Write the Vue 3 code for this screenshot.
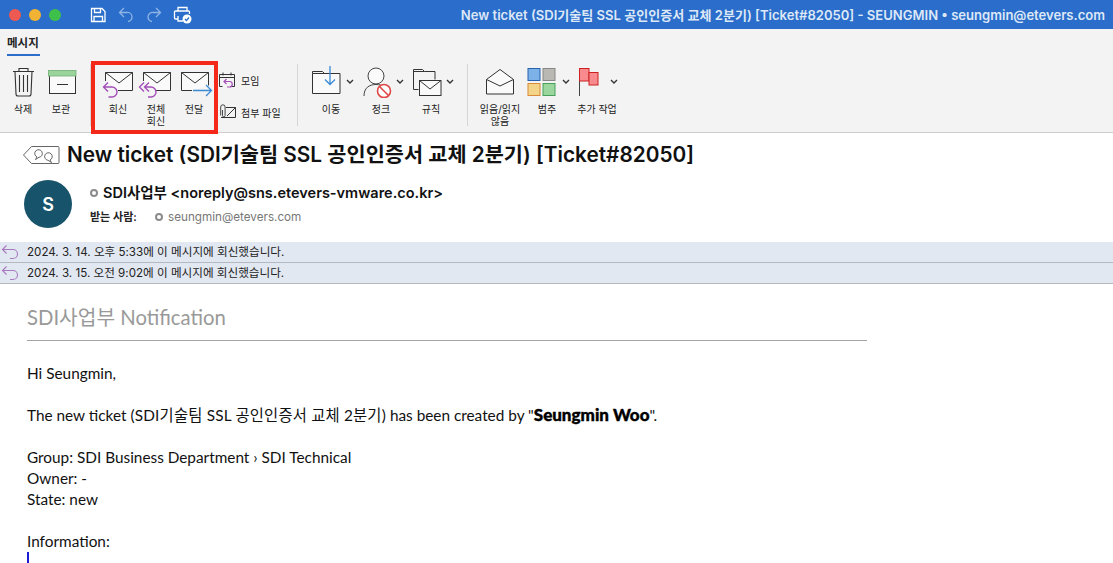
<template>
  <div class="window">
    <!-- title bar -->
    <header class="titlebar">
      <div class="lights">
        <span class="light red"></span>
        <span class="light yellow"></span>
        <span class="light green"></span>
      </div>
      <div class="quick">
        <svg width="18" height="18" viewBox="0 0 18 18" fill="none" stroke="#fff" stroke-width="1.3">
          <path d="M2.500 2.500h10.500l3 3v10h-13.500z" />
          <path d="M5.500 2.500v4h6v-4M5 15.500v-5h8.500v5" />
        </svg>
        <svg width="18" height="18" viewBox="0 0 18 18" fill="none" stroke="#8fb3e6" stroke-width="1.3">
          <path d="M7 2L2.500 6.500 7 11M2.500 6.500H10a4.500 4.500 0 0 1 1 9" />
        </svg>
        <svg width="18" height="18" viewBox="0 0 18 18" fill="none" stroke="#8fb3e6" stroke-width="1.3">
          <path d="M11 2l4.500 4.500L11 11M15.500 6.500H8a4.500 4.500 0 0 0-1 9" />
        </svg>
        <svg width="20" height="18" viewBox="0 0 20 18" fill="none" stroke="#fff" stroke-width="1.3">
          <path d="M5 5V1.500h9V5M5 13H2.500a1 1 0 0 1-1-1V6a1 1 0 0 1 1-1h13a1 1 0 0 1 1 1v2" />
          <path d="M5 10v5h5" />
          <circle cx="14" cy="13" r="4.500" fill="#fff" stroke="none" />
          <path d="M12 13l1.500 1.500 2.500-3" stroke="#2a6dca" />
        </svg>
      </div>
      <div class="wintitle">New ticket (SDI기술팀 SSL 공인인증서 교체 2분기) [Ticket#82050] - SEUNGMIN • seungmin@etevers.com</div>
    </header>

    <!-- ribbon -->
    <section class="ribbon">
      <div class="tabs"><span class="tab">메시지</span></div>
      <div class="tools">
        <div class="tool">
          <svg width="38" height="34" viewBox="0 0 38 34" fill="none" stroke="#333" stroke-width="1.1">
            <path d="M9 7.500h21M15 7.500V4.500h9v3M11 7.500l1 22.500a2 2 0 0 0 2 2h11a2 2 0 0 0 2-2l1-22.500" />
            <path d="M15.500 11v17M19.500 11v17M23.500 11v17" />
          </svg>
          <span class="label">삭제</span>
        </div>
        <div class="tool">
          <svg width="38" height="34" viewBox="0 0 38 34" fill="none">
            <rect x="7.500" y="7.500" width="26" height="22" fill="#fafafa" stroke="#333" />
            <rect x="6.500" y="6.500" width="27.500" height="5.500" fill="#9bd49b" stroke="#6fae78" stroke-width=".8" />
            <path d="M15 20.500h11" stroke="#333" />
          </svg>
          <span class="label">보관</span>
        </div>
        <div class="sep"></div>

        <div class="tool">
          <svg width="38" height="34" viewBox="0 0 38 34" fill="none">
            <path d="M6.500 17V8.500h27v18H19" fill="#fafafa" stroke="#333" />
            <path d="M6.500 8.500L20 19l13.500-10.500" stroke="#333" />
            <path d="M9 18.500L4.500 23 9 27.500M4.500 23H13a5 5 0 0 1 0 10H9.500" stroke="#a34fb8" stroke-width="1.400" />
          </svg>
          <span class="label">회신</span>
        </div>
        <div class="tool">
          <svg width="38" height="34" viewBox="0 0 38 34" fill="none">
            <path d="M6.500 17V8.500h27v18H19" fill="#fafafa" stroke="#333" />
            <path d="M6.500 8.500L20 19l13.500-10.500" stroke="#333" />
            <path d="M7 18.500L2.500 23 7 27.500M12 18.500L7.500 23 12 27.500M7.500 23H14a5 5 0 0 1 0 10H11" stroke="#a34fb8" stroke-width="1.400" />
          </svg>
          <span class="label">전체<br />회신</span>
        </div>
        <div class="tool">
          <svg width="38" height="34" viewBox="0 0 38 34" fill="none">
            <path d="M17 26.500H6.500v-18h27v13" fill="#fafafa" stroke="#333" />
            <path d="M6.500 8.500L20 19l13.500-10.500" stroke="#333" />
            <path d="M18 26.500h18M31 21l5.500 5.500L31 32" stroke="#3a8ad6" stroke-width="1.300" />
          </svg>
          <span class="label">전달</span>
        </div>

        <div class="side">
          <div class="side-row">
            <svg width="18" height="18" viewBox="0 0 18 18" fill="none">
              <path d="M12 15.500h4.500v-12h-15v12h3M1.500 6.500h15" stroke="#333" />
              <path d="M5 1.500v3M13 1.500v3" stroke="#333" />
              <path d="M8.500 8L6 10.500 8.500 13M6 10.500h5.500a2.500 2.500 0 0 1 0 5.500H9" stroke="#a34fb8" stroke-width="1.200" />
            </svg>
            <span>모임</span>
          </div>
          <div class="side-row">
            <svg width="18" height="18" viewBox="0 0 18 18" fill="none">
              <path d="M8 4.500h9.500v10H3" stroke="#333" />
              <path d="M9 13l8.500-8.500" stroke="#333" />
              <path d="M4.500 7v5.500a1.300 1.300 0 0 0 2.600 0V4a2.200 2.200 0 0 0-4.400 0v8.500" stroke="#333" stroke-width=".9" />
            </svg>
            <span>첨부 파일</span>
          </div>
        </div>
        <div class="sep sep-b"></div>

        <div class="tool drop">
          <svg width="50" height="34" viewBox="0 0 50 34" fill="none">
            <path d="M6.500 9.500h27.500v20H6.500z" fill="#fafafa" stroke="#333" />
            <path d="M6.500 9.500v-2h10l2 2" stroke="#333" />
            <path d="M24 2v18.500M19 15.500l5 5 5-5" stroke="#3a8ad6" stroke-width="1.300" />
          </svg>
          <svg class="chev" width="8" height="6" viewBox="0 0 8 6" fill="none" stroke="#333" stroke-width="1.400"><path d="M1 1l3 3 3-3" /></svg>
          <span class="label">이동</span>
        </div>
        <div class="tool drop">
          <svg width="50" height="34" viewBox="0 0 50 34" fill="none">
            <circle cx="20" cy="12" r="8" fill="#fafafa" stroke="#444" />
            <path d="M8 32c0-8 5-11.500 12-11.500s12 3.500 12 11.500" stroke="#444" />
            <circle cx="28" cy="27" r="6.500" fill="#fff" stroke="#e04848" stroke-width="1.600" />
            <path d="M23.500 22.500l9 9" stroke="#e04848" stroke-width="1.600" />
          </svg>
          <svg class="chev" width="8" height="6" viewBox="0 0 8 6" fill="none" stroke="#333" stroke-width="1.400"><path d="M1 1l3 3 3-3" /></svg>
          <span class="label">정크</span>
        </div>
        <div class="tool drop">
          <svg width="50" height="34" viewBox="0 0 50 34" fill="none">
            <path d="M7.500 25.500v-20h9l2 2h10.500v8" stroke="#333" />
            <path d="M7.500 7.500h11M7.500 25.500h5" stroke="#333" />
            <rect x="13.500" y="16.500" width="21.500" height="15" fill="#fafafa" stroke="#333" />
            <path d="M13.500 16.500L24 25l11-8.500" stroke="#333" />
          </svg>
          <svg class="chev" width="8" height="6" viewBox="0 0 8 6" fill="none" stroke="#333" stroke-width="1.400"><path d="M1 1l3 3 3-3" /></svg>
          <span class="label">규칙</span>
        </div>
        <div class="sep sep-c"></div>

        <div class="tool wide">
          <svg width="50" height="34" viewBox="0 0 50 34" fill="none">
            <path d="M11.500 15.500L25 5.500l13.500 10v14.500h-27z" fill="#fafafa" stroke="#333" />
            <path d="M11.500 15.500L25 22l13.500-6.500" stroke="#333" />
          </svg>
          <span class="label">읽음/읽지<br />않음</span>
        </div>
        <div class="tool drop cat">
          <svg width="44" height="34" viewBox="0 0 44 34" fill="none">
            <rect x="3" y="4.500" width="12" height="12" fill="#7cb2e8" stroke="#2a62ad" />
            <rect x="18" y="4.500" width="12" height="12" fill="#b9b8b2" stroke="#888" />
            <rect x="3" y="19.500" width="12" height="12" fill="#f3d489" stroke="#d98a3a" />
            <rect x="18" y="19.500" width="12" height="12" fill="#9bd69f" stroke="#47a05a" />
          </svg>
          <svg class="chev" width="8" height="6" viewBox="0 0 8 6" fill="none" stroke="#333" stroke-width="1.400"><path d="M1 1l3 3 3-3" /></svg>
          <span class="label">범주</span>
        </div>
        <div class="tool drop more">
          <svg width="50" height="34" viewBox="0 0 50 34" fill="none">
            <path d="M7.500 5v27" stroke="#444" />
            <rect x="7.500" y="4.500" width="9.500" height="12.500" fill="#f98b8f" stroke="#c22" />
            <rect x="17" y="8.500" width="9" height="12.500" fill="#f98b8f" stroke="#c22" />
          </svg>
          <svg class="chev" width="8" height="6" viewBox="0 0 8 6" fill="none" stroke="#333" stroke-width="1.400"><path d="M1 1l3 3 3-3" /></svg>
          <span class="label">추가 작업</span>
        </div>
      </div>
      <div class="highlight"></div>
    </section>

    <!-- message header -->
    <section class="msg-head">
      <div class="subject-row">
        <svg width="38" height="20" viewBox="0 0 38 20" fill="none" stroke="#555" stroke-width=".9">
          <path d="M9.500 1.500H36a1 1 0 0 1 1 1v15a1 1 0 0 1-1 1H9.500L1.500 10z" />
          <path d="M15 12l-1.500 2.500L17 12.300a3.800 3.800 0 1 0-2-.3z" />
          <path d="M28 15l1.500 2.500L26 15.300a3.800 3.800 0 1 1 2-.3z" />
        </svg>
        <h1 class="subject">New ticket (SDI기술팀 SSL 공인인증서 교체 2분기) [Ticket#82050]</h1>
      </div>
      <div class="people">
        <div class="avatar">S</div>
        <div class="addr">
          <div class="from"><span class="dot"></span>SDI사업부 &lt;noreply@sns.etevers-vmware.co.kr&gt;</div>
          <div class="to">
            <span class="to-label">받는 사람:</span>
            <span class="dot"></span><span class="to-mail">seungmin@etevers.com</span>
          </div>
        </div>
      </div>
    </section>

    <div class="notice" v-for="n in notices" :key="n">
      <svg width="20" height="18" viewBox="0 0 20 18" fill="none" stroke="#a878c0" stroke-width="1.100">
        <path d="M6.500 1.500L2.500 5.500l4 4M2.500 5.500H13a4.500 4.500 0 0 1 0 9h-3" />
      </svg>
      <span>{{ n }}</span>
    </div>

    <!-- body -->
    <main class="mail">
      <h2 class="brand">SDI사업부 Notification</h2>
      <hr class="rule" />
      <p>Hi Seungmin,</p>
      <p>The new ticket <span class="ko">(SDI기술팀 SSL 공인인증서 교체 2분기)</span> has been created by "<b>Seungmin Woo</b>".</p>
      <p>Group: SDI Business Department › SDI Technical<br />Owner: -<br />State: new</p>
      <p class="info">Information:</p>
      <div class="caret"></div>
    </main>
  </div>
</template>

<script setup>
const notices = [
  '2024. 3. 14. 오후 5:33에 이 메시지에 회신했습니다.',
  '2024. 3. 15. 오전 9:02에 이 메시지에 회신했습니다.',
]
</script>

<style>
html, body {
  margin: 0;
  background: #fff;
}
</style>

<style scoped>
.window {
  width: 1113px;
  height: 563px;
  overflow: hidden;
  display: flex;
  flex-direction: column;
  font-family: Inter, "Noto Sans CJK KR", sans-serif;
  color: #111;
  background: #fff;
}

/* Title bar */
.titlebar {
  height: 29px;
  flex: none;
  background: #2a6dca;
  display: flex;
  align-items: center;
}

.lights {
  display: flex;
  gap: 8px;
  margin-left: 9px;
}

.light {
  width: 12px;
  height: 12px;
  border-radius: 50%;
}

.red { background: #ee5a52; }
.yellow { background: #f2b233; }
.green { background: #3fc04a; }

.quick {
  display: flex;
  align-items: center;
  gap: 10px;
  margin-left: 28px;
}

.wintitle {
  margin-left: auto;
  margin-right: 8px;
  font-size: 13.050px;
  font-weight: 600;
  color: #dde8f7;
  white-space: nowrap;
}

/* Ribbon */
.ribbon {
  position: relative;
  height: 103px;
  flex: none;
  background: #f3f3f3;
  border-bottom: 1px solid #cfcfcf;
}

.tabs {
  height: 28px;
  padding-left: 7px;
}

.tab {
  display: inline-block;
  height: 25px;
  line-height: 28px;
  font-size: 11.500px;
  font-weight: 700;
  color: #222;
  border-bottom: 2px solid #2a6dca;
  width: 33px;
  white-space: nowrap;
}

.tools {
  display: flex;
  align-items: flex-start;
  padding: 7px 0 0 4px;
}

.tool {
  position: relative;
  width: 38px;
  display: flex;
  flex-direction: column;
  align-items: center;
  flex: none;
}

.tool svg {
  display: block;
  flex: none;
}

.label {
  margin-top: 5px;
  font-size: 10px;
  line-height: 12px;
  color: #222;
  text-align: center;
  white-space: nowrap;
}

.sep {
  flex: none;
  width: 1px;
  height: 62px;
  background: #d6d6d6;
  margin: 0 8px 0 10px;
}

.sep-b {
  margin: 0 8px 0 0;
}

.sep-c {
  margin: 0 7px 0 11px;
}

.side {
  flex: none;
  width: 79px;
  margin-left: 5px;
  display: flex;
  flex-direction: column;
  gap: 14px;
  padding-top: 7px;
}

.side-row {
  display: flex;
  align-items: center;
  gap: 5px;
  font-size: 10px;
  color: #222;
}

.drop, .wide, .more {
  width: 50px;
}

.cat {
  width: 44px;
}

.more {
  margin-left: 3px;
}

.chev {
  position: absolute;
  top: 15px;
  right: 2px;
}

.cat .chev {
  right: -1px;
}

.more .chev {
  right: 4px;
}

.highlight {
  position: absolute;
  left: 91px;
  top: 32px;
  width: 119px;
  height: 65px;
  border: 4px solid #f4291a;
}

/* Message header */
.msg-head {
  flex: none;
  height: 109px;
}

.subject-row {
  display: flex;
  align-items: center;
  gap: 7px;
  padding: 9px 0 0 22px;
}

.subject {
  margin: 0;
  font-size: 20.800px;
  font-weight: 600;
  line-height: 25px;
  color: #111;
  white-space: nowrap;
}

.people {
  display: flex;
  margin: 13px 0 0 24px;
  gap: 18px;
}

.avatar {
  width: 48px;
  height: 48px;
  border-radius: 50%;
  background: #17536b;
  color: #fff;
  font-size: 18px;
  font-weight: 600;
  display: flex;
  align-items: center;
  justify-content: center;
}

.addr {
  padding-top: 4px;
}

.dot {
  display: inline-block;
  width: 4px;
  height: 4px;
  border: 2px solid #8c8c8c;
  border-radius: 50%;
  margin-right: 5px;
  vertical-align: 1px;
}

.from {
  font-size: 14.500px;
  font-weight: 600;
  line-height: 18px;
  color: #111;
}

.to {
  display: flex;
  align-items: center;
  margin-top: 6px;
  font-size: 11px;
  line-height: 18px;
}

.to-label {
  width: 65px;
  font-weight: 600;
  color: #222;
}

.to .dot {
  margin-right: 5px;
  vertical-align: 0;
}

.to-mail {
  font-size: 11.700px;
  color: #777;
}

.notice {
  flex: none;
  height: 20px;
  background: #e2e8f1;
  border-bottom: 1px solid #b5b8be;
  display: flex;
  align-items: center;
  gap: 7px;
  font-size: 11.600px;
  color: #222;
}

.notice span {
  padding-bottom: 2px;
}

.notice svg {
  flex: none;
  margin-top: 2px;
}

/* Mail body */
.mail {
  padding: 20px 0 0 27px;
  font-family: Lato, "Noto Sans CJK KR", sans-serif;
  font-size: 15.350px;
  line-height: 21px;
  color: #111;
}

.brand {
  margin: 0;
  font-size: 20.300px;
  font-weight: 400;
  line-height: 26px;
  color: #999;
}

.rule {
  width: 840px;
  height: 1px;
  margin: 10px 0 22px;
  border: 0;
  background: #a3a3a3;
}

.mail p {
  margin: 0 0 21px;
}

.ko {
  letter-spacing: 0.200px;
}

.mail b {
  font-size: 17px;
  line-height: 1;
  font-weight: 900;
  -webkit-text-stroke: 0.4px #000;
  color: #000;
}

.mail .info {
  margin: 0;
}

.caret {
  width: 2px;
  height: 12px;
  background: #1a1ad8;
}
</style>
